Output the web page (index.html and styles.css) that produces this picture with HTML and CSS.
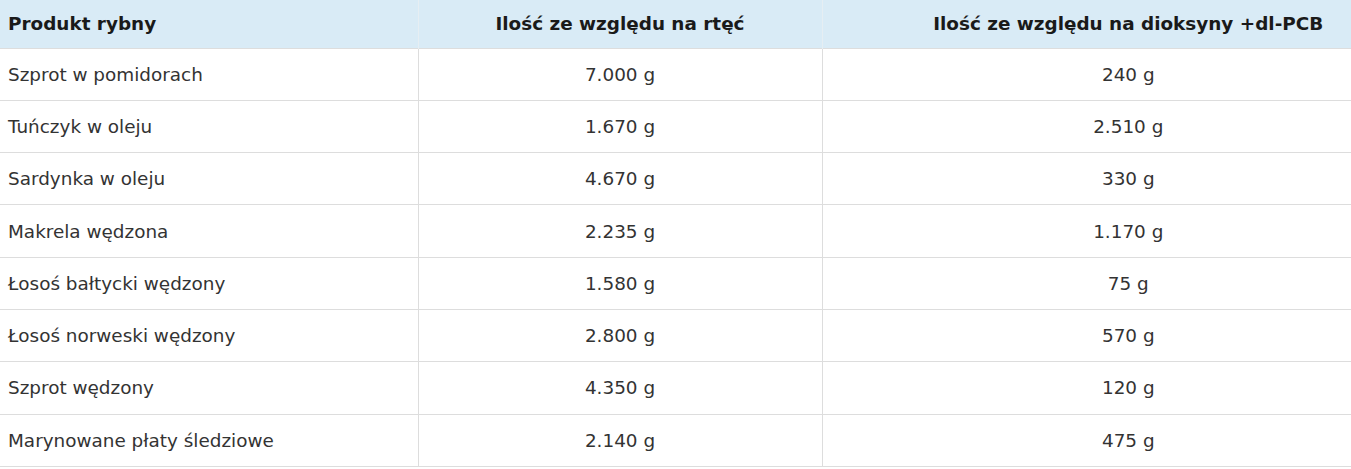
FILE: index.html
```html
<!DOCTYPE html>
<html lang="pl">
<head>
<meta charset="utf-8">
<link rel="stylesheet" href="styles.css">
</head>
<body>
<div class="frame">
<table class="fish">
  <colgroup>
    <col class="c1"><col class="c2"><col class="c3">
  </colgroup>
  <thead>
    <tr>
      <th class="left">Produkt rybny</th>
      <th>Ilość ze względu na rtęć</th>
      <th>Ilość ze względu na dioksyny +dl-PCB</th>
    </tr>
  </thead>
  <tbody>
    <tr><td class="left">Szprot w pomidorach</td><td>7.000 g</td><td>240 g</td></tr>
    <tr><td class="left">Tuńczyk w oleju</td><td>1.670 g</td><td>2.510 g</td></tr>
    <tr><td class="left">Sardynka w oleju</td><td>4.670 g</td><td>330 g</td></tr>
    <tr><td class="left">Makrela wędzona</td><td>2.235 g</td><td>1.170 g</td></tr>
    <tr><td class="left">Łosoś bałtycki wędzony</td><td>1.580 g</td><td>75 g</td></tr>
    <tr><td class="left">Łosoś norweski wędzony</td><td>2.800 g</td><td>570 g</td></tr>
    <tr><td class="left">Szprot wędzony</td><td>4.350 g</td><td>120 g</td></tr>
    <tr><td class="left">Marynowane płaty śledziowe</td><td>2.140 g</td><td>475 g</td></tr>
  </tbody>
</table>
</div>
</body>
</html>
```

FILE: styles.css
```css
html, body {
  margin: 0;
  padding: 0;
  background: #ffffff;
}
body {
  font-family: "DejaVu Sans", Verdana, sans-serif;
  font-size: 18.4px;
  color: #333333;
}
.frame {
  width: 100%;
  overflow: hidden;
}
.fish {
  width: 1434px;
  border-collapse: collapse;
  table-layout: fixed;
}
.c1 { width: 418px; }
.c2 { width: 404px; }
.c3 { width: 612px; }
.fish th {
  background: #d9ebf6;
  color: #1a1a1a;
  font-weight: bold;
  height: 48px;
  padding: 0 8px;
  text-align: center;
  border-left: 1px solid #e6eef3;
  box-sizing: border-box;
}
.fish td {
  height: 52.3px;
  padding: 0 8px;
  text-align: center;
  border-top: 1px solid #dddddd;
  border-bottom: 1px solid #dddddd;
  border-left: 1px solid #dddddd;
  box-sizing: border-box;
}
.fish th:first-child, .fish td:first-child { border-left: none; }
.fish .left { text-align: left; }
```
